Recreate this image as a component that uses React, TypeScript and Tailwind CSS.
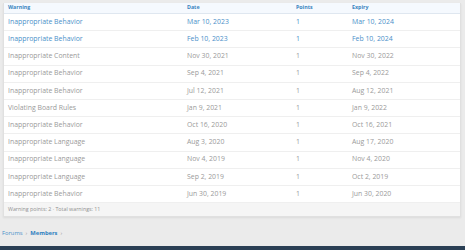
import React from "react";

const rows: { w: string; d: string; p: string; e: string; link?: boolean }[] = [
  { w: "Inappropriate Behavior", d: "Mar 10, 2023", p: "1", e: "Mar 10, 2024", link: true },
  { w: "Inappropriate Behavior", d: "Feb 10, 2023", p: "1", e: "Feb 10, 2024", link: true },
  { w: "Inappropriate Content", d: "Nov 30, 2021", p: "1", e: "Nov 30, 2022" },
  { w: "Inappropriate Behavior", d: "Sep 4, 2021", p: "1", e: "Sep 4, 2022" },
  { w: "Inappropriate Behavior", d: "Jul 12, 2021", p: "1", e: "Aug 12, 2021" },
  { w: "Violating Board Rules", d: "Jan 9, 2021", p: "1", e: "Jan 9, 2022" },
  { w: "Inappropriate Behavior", d: "Oct 16, 2020", p: "1", e: "Oct 16, 2021" },
  { w: "Inappropriate Language", d: "Aug 3, 2020", p: "1", e: "Aug 17, 2020" },
  { w: "Inappropriate Language", d: "Nov 4, 2019", p: "1", e: "Nov 4, 2020" },
  { w: "Inappropriate Language", d: "Sep 2, 2019", p: "1", e: "Oct 2, 2019" },
  { w: "Inappropriate Behavior", d: "Jun 30, 2019", p: "1", e: "Jun 30, 2020" },
];

const grid = "grid grid-cols-[183px_109px_56px_1fr]";

export default function App() {
  return (
    <div
      className="w-[465px] h-[250px] bg-[#ebebeb] flex flex-col overflow-hidden"
      style={{ fontFamily: '"Open Sans", "Noto Sans", sans-serif' }}
    >
      <div className="pt-[3px] pl-[3px] pr-[4px]">
        <div className="bg-white border border-[#e0e0e0] border-t-0 shadow-[0_1px_2px_rgba(0,0,0,0.07)]">
          <div className={`${grid} h-[11px] items-center bg-[#f5f9fe] border-b border-[#dfe7f0] text-[5.3px] font-bold text-[#3a85c0]`}>
            <div className="pl-[4px]">Warning</div>
            <div>Date</div>
            <div>Points</div>
            <div>Expiry</div>
          </div>
          {rows.map((r, i) => (
            <div
              key={i}
              className={`${grid} h-[17.2px] items-center border-b border-[#efefef] text-[6.9px] ${r.link ? "text-[#4a90c9]" : "text-[#9a9a9a]"}`}
            >
              <div className="pl-[4px]">{r.w}</div>
              <div>{r.d}</div>
              <div>{r.p}</div>
              <div>{r.e}</div>
            </div>
          ))}
          <div className="h-[13px] flex items-center pl-[4px] bg-[#f5f5f5] text-[5.3px] text-[#909090]">
            Warning points: 2 · Total warnings: 11
          </div>
        </div>
      </div>
      <div className="flex-1 flex items-center pl-[2px] pt-[4px] text-[5.8px] gap-[3px]">
        <span className="text-[#4a90c9]">Forums</span>
        <span className="text-[#9a9a9a]">›</span>
        <span className="text-[#2f7fbf] font-bold">Members</span>
        <span className="text-[#9a9a9a]">›</span>
      </div>
      <div className="h-[4px] bg-[#2a3f54]" />
    </div>
  );
}
